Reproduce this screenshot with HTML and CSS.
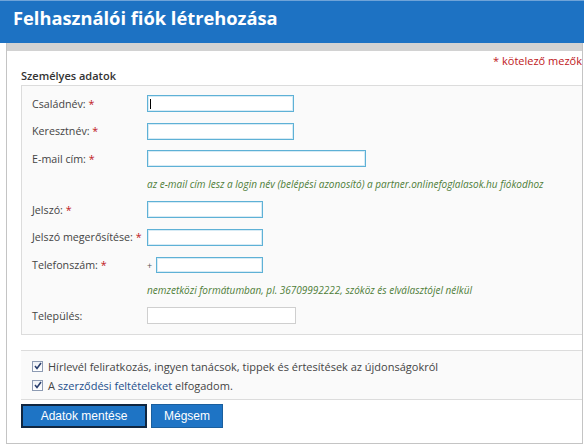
FILE: index.html
```html
<!DOCTYPE html>
<html lang="hu">
<head>
<meta charset="utf-8">
<title>Felhasználói fiók létrehozása</title>
<link rel="stylesheet" href="styles.css">
</head>
<body>
<div class="header"><h1>Felhasználói fiók létrehozása</h1></div>
<div class="panel">
  <div class="panel-bar"></div>
  <div class="required">* kötelező mezők</div>
  <div class="legend">Személyes adatok</div>
  <div class="fieldbox">
    <div class="row"><label>Családnév: <span class="star">*</span></label><span class="input focus w146"><span class="caret"></span></span></div>
    <div class="row"><label>Keresztnév: <span class="star">*</span></label><span class="input w146"></span></div>
    <div class="row"><label>E-mail cím: <span class="star">*</span></label><span class="input w218"></span></div>
    <div class="help">az e-mail cím lesz a login név (belépési azonosító) a partner.onlinefoglalasok.hu fiókodhoz</div>
    <div class="row"><label>Jelszó: <span class="star">*</span></label><span class="input w115"></span></div>
    <div class="row"><label>Jelszó megerősítése: <span class="star">*</span></label><span class="input w115"></span></div>
    <div class="row"><label>Telefonszám: <span class="star">*</span></label><span class="plus">+</span><span class="input w106 short"></span></div>
    <div class="help">nemzetközi formátumban, pl. 36709992222, szóköz és elválasztójel nélkül</div>
    <div class="row"><label>Település:</label><span class="input plain w148"></span></div>
  </div>
  <div class="checks">
    <div class="check"><span class="cb"><svg width="8" height="8" viewBox="0 0 8 8"><path d="M1 4 L3 6.5 L7 1" fill="none" stroke="#2a3f6e" stroke-width="1.6"/></svg></span><span>Hírlevél feliratkozás, ingyen tanácsok, tippek és értesítések az újdonságokról</span></div>
    <div class="check"><span class="cb"><svg width="8" height="8" viewBox="0 0 8 8"><path d="M1 4 L3 6.5 L7 1" fill="none" stroke="#2a3f6e" stroke-width="1.6"/></svg></span><span>A <a class="link">szerződési feltételeket</a> elfogadom.</span></div>
  </div>
  <div class="buttons">
    <span class="btn primary">Adatok mentése</span>
    <span class="btn cancel">Mégsem</span>
  </div>
</div>
</body>
</html>
```
FILE: styles.css
```css
* { box-sizing: border-box; }
html, body { margin: 0; padding: 0; background: #fff; }
body { font-family: "Open Sans", "DejaVu Sans", sans-serif; font-size: 11px; color: #444; width: 584px; height: 445px; overflow: hidden; }
.header { height: 43px; background: #1d72c3; border-top: 1px solid #6fa3d8; }
.header h1 { margin: 0; padding: 2px 0 0 13px; color: #fff; font-family: "Open Sans", sans-serif; font-weight: 700; font-size: 18.3px; line-height: 30px; }
.panel { margin-left: 6px; width: 577px; border-left: 1px solid #c4c4c4; border-right: 1px solid #c4c4c4; border-bottom: 1px solid #c4c4c4; height: 401px; }
.panel-bar { height: 8px; background: #d2d2d2; }
.required { text-align: right; color: #c0161b; font-size: 11px; line-height: 14px; padding-top: 3px; margin-right: 0; }
.legend { margin-left: 14px; font-weight: 600; color: #333; line-height: 14px; margin-top: 1px; }
.fieldbox { margin: 2px 0 0 14px; border: 1px solid #dcdcdc; border-right: none; background: #fafafa; padding: 9px 0 10px 10px; display: flex; flex-direction: column; gap: 10.5px; }
.row { display: flex; align-items: center; height: 17px; }
.row label { width: 115px; flex: none; color: #444; font-size: 10.7px; }
.star { color: #c0161b; }
.input { display: inline-block; height: 17px; border: 1px solid #5eb1d6; background: #fff; position: relative; box-shadow: inset 0 0 0 1px rgba(94,177,214,0.25); }
.input.short { height: 16px; }
.input.plain { border-color: #cfcfcf; box-shadow: none; }
.caret { position: absolute; left: 2px; top: 3px; width: 1px; height: 10px; background: #000; }
.w146 { width: 147px; }
.w218 { width: 219px; }
.w115 { width: 116px; }
.w106 { width: 107px; }
.w148 { width: 149px; }
.plus { width: 9px; font-size: 9px; color: #555; padding-top: 2px; }
.help { margin-left: 115px; color: #4e7d38; font-style: italic; font-size: 10px; line-height: 13px; height: 13px; }
.checks { margin: 15px 0 0 14px; border-top: 1px solid #dcdcdc; border-bottom: 1px solid #dcdcdc; background: #fafafa; height: 50px; padding: 8px 0 0 11px; display: flex; flex-direction: column; gap: 5px; }
.check { display: flex; align-items: center; height: 14px; color: #444; white-space: pre; }
.cb { width: 11px; height: 11px; border: 1px solid #8d9bb3; background: linear-gradient(#eef1f6, #fff); display: inline-flex; align-items: center; justify-content: center; margin-right: 5px; flex: none; }
.link { color: #1d4f8c; text-decoration: none; }
.buttons { margin: 4px 0 0 14px; display: flex; gap: 4px; }
.btn { display: inline-flex; align-items: center; justify-content: center; height: 24px; background: #1e74c5; color: #fff; font-family: "Liberation Sans", Arial, sans-serif; font-size: 12px; }
.btn.primary { width: 126px; border: 2px solid #102640; }
.btn.cancel { width: 72px; border: 1px solid #1a5f9e; }
```
